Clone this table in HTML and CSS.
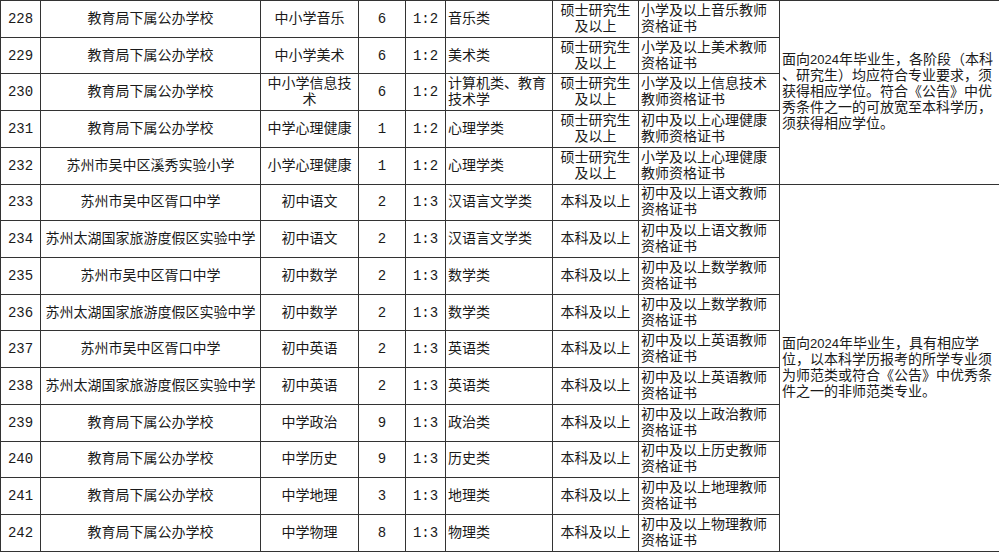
FILE: index.html
```html
<!DOCTYPE html>
<html lang="zh-CN">
<head>
<meta charset="utf-8">
<title>招聘岗位表</title>
<link rel="stylesheet" href="styles.css">
</head>
<body>
<table class="jobs">
  <colgroup>
    <col class="c-no">
    <col class="c-unit">
    <col class="c-subj">
    <col class="c-num">
    <col class="c-ratio">
    <col class="c-major">
    <col class="c-edu">
    <col class="c-cert">
    <col class="c-note">
  </colgroup>
  <tbody>
    <tr>
      <td class="ctr">228</td><td class="ctr">教育局下属公办学校</td><td class="ctr">中小学音乐</td><td class="ctr">6</td><td class="ctr">1:2</td><td class="lft">音乐类</td><td class="ctr">硕士研究生<br>及以上</td><td class="lft">小学及以上音乐教师<br>资格证书</td>
      <td class="lft note" rowspan="5">面向<span class="yr">2024</span>年毕业生，各阶段（本科<br>、研究生）均应符合专业要求，须<br>获得相应学位。符合《公告》中优<br>秀条件之一的可放宽至本科学历，<br>须获得相应学位。</td>
    </tr>
    <tr>
      <td class="ctr">229</td><td class="ctr">教育局下属公办学校</td><td class="ctr">中小学美术</td><td class="ctr">6</td><td class="ctr">1:2</td><td class="lft">美术类</td><td class="ctr">硕士研究生<br>及以上</td><td class="lft">小学及以上美术教师<br>资格证书</td>
    </tr>
    <tr>
      <td class="ctr">230</td><td class="ctr">教育局下属公办学校</td><td class="ctr">中小学信息技<br>术</td><td class="ctr">6</td><td class="ctr">1:2</td><td class="lft">计算机类、教育<br>技术学</td><td class="ctr">硕士研究生<br>及以上</td><td class="lft">小学及以上信息技术<br>教师资格证书</td>
    </tr>
    <tr>
      <td class="ctr">231</td><td class="ctr">教育局下属公办学校</td><td class="ctr">中学心理健康</td><td class="ctr">1</td><td class="ctr">1:2</td><td class="lft">心理学类</td><td class="ctr">硕士研究生<br>及以上</td><td class="lft">初中及以上心理健康<br>教师资格证书</td>
    </tr>
    <tr>
      <td class="ctr">232</td><td class="ctr">苏州市吴中区溪秀实验小学</td><td class="ctr">小学心理健康</td><td class="ctr">1</td><td class="ctr">1:2</td><td class="lft">心理学类</td><td class="ctr">硕士研究生<br>及以上</td><td class="lft">小学及以上心理健康<br>教师资格证书</td>
    </tr>
    <tr>
      <td class="ctr">233</td><td class="ctr">苏州市吴中区胥口中学</td><td class="ctr">初中语文</td><td class="ctr">2</td><td class="ctr">1:3</td><td class="lft">汉语言文学类</td><td class="ctr">本科及以上</td><td class="lft">初中及以上语文教师<br>资格证书</td>
      <td class="lft note" rowspan="10">面向<span class="yr">2024</span>年毕业生，具有相应学<br>位，以本科学历报考的所学专业须<br>为师范类或符合《公告》中优秀条<br>件之一的非师范类专业。</td>
    </tr>
    <tr>
      <td class="ctr">234</td><td class="ctr">苏州太湖国家旅游度假区实验中学</td><td class="ctr">初中语文</td><td class="ctr">2</td><td class="ctr">1:3</td><td class="lft">汉语言文学类</td><td class="ctr">本科及以上</td><td class="lft">初中及以上语文教师<br>资格证书</td>
    </tr>
    <tr>
      <td class="ctr">235</td><td class="ctr">苏州市吴中区胥口中学</td><td class="ctr">初中数学</td><td class="ctr">2</td><td class="ctr">1:3</td><td class="lft">数学类</td><td class="ctr">本科及以上</td><td class="lft">初中及以上数学教师<br>资格证书</td>
    </tr>
    <tr>
      <td class="ctr">236</td><td class="ctr">苏州太湖国家旅游度假区实验中学</td><td class="ctr">初中数学</td><td class="ctr">2</td><td class="ctr">1:3</td><td class="lft">数学类</td><td class="ctr">本科及以上</td><td class="lft">初中及以上数学教师<br>资格证书</td>
    </tr>
    <tr>
      <td class="ctr">237</td><td class="ctr">苏州市吴中区胥口中学</td><td class="ctr">初中英语</td><td class="ctr">2</td><td class="ctr">1:3</td><td class="lft">英语类</td><td class="ctr">本科及以上</td><td class="lft">初中及以上英语教师<br>资格证书</td>
    </tr>
    <tr>
      <td class="ctr">238</td><td class="ctr">苏州太湖国家旅游度假区实验中学</td><td class="ctr">初中英语</td><td class="ctr">2</td><td class="ctr">1:3</td><td class="lft">英语类</td><td class="ctr">本科及以上</td><td class="lft">初中及以上英语教师<br>资格证书</td>
    </tr>
    <tr>
      <td class="ctr">239</td><td class="ctr">教育局下属公办学校</td><td class="ctr">中学政治</td><td class="ctr">9</td><td class="ctr">1:3</td><td class="lft">政治类</td><td class="ctr">本科及以上</td><td class="lft">初中及以上政治教师<br>资格证书</td>
    </tr>
    <tr>
      <td class="ctr">240</td><td class="ctr">教育局下属公办学校</td><td class="ctr">中学历史</td><td class="ctr">9</td><td class="ctr">1:3</td><td class="lft">历史类</td><td class="ctr">本科及以上</td><td class="lft">初中及以上历史教师<br>资格证书</td>
    </tr>
    <tr>
      <td class="ctr">241</td><td class="ctr">教育局下属公办学校</td><td class="ctr">中学地理</td><td class="ctr">3</td><td class="ctr">1:3</td><td class="lft">地理类</td><td class="ctr">本科及以上</td><td class="lft">初中及以上地理教师<br>资格证书</td>
    </tr>
    <tr>
      <td class="ctr">242</td><td class="ctr">教育局下属公办学校</td><td class="ctr">中学物理</td><td class="ctr">8</td><td class="ctr">1:3</td><td class="lft">物理类</td><td class="ctr">本科及以上</td><td class="lft">初中及以上物理教师<br>资格证书</td>
    </tr>
  </tbody>
</table>
</body>
</html>
```

FILE: styles.css
```css
html, body {
  margin: 0;
  padding: 0;
  background: #ffffff;
}

.jobs {
  border-collapse: collapse;
  table-layout: fixed;
  width: 999px;
  font-family: "Liberation Mono", "Noto Sans CJK SC", monospace;
  font-size: 14px;
  line-height: 16px;
  color: #1a1a1a;
}

.c-no { width: 40px; }
.c-unit { width: 220px; }
.c-subj { width: 98px; }
.c-num { width: 47px; }
.c-ratio { width: 40px; }
.c-major { width: 107px; }
.c-edu { width: 86px; }
.c-cert { width: 141px; }
.c-note { width: 220px; }

.jobs tr {
  height: 36.73px;
}

.jobs td {
  border: 1px solid #333;
  padding: 0 2px;
  vertical-align: middle;
  white-space: nowrap;
  overflow: hidden;
}

.ctr { text-align: center; }
.lft { text-align: left; padding-left: 3px; }

.yr {
  font-family: "Liberation Sans", sans-serif;
  font-size: 13px;
}
```
